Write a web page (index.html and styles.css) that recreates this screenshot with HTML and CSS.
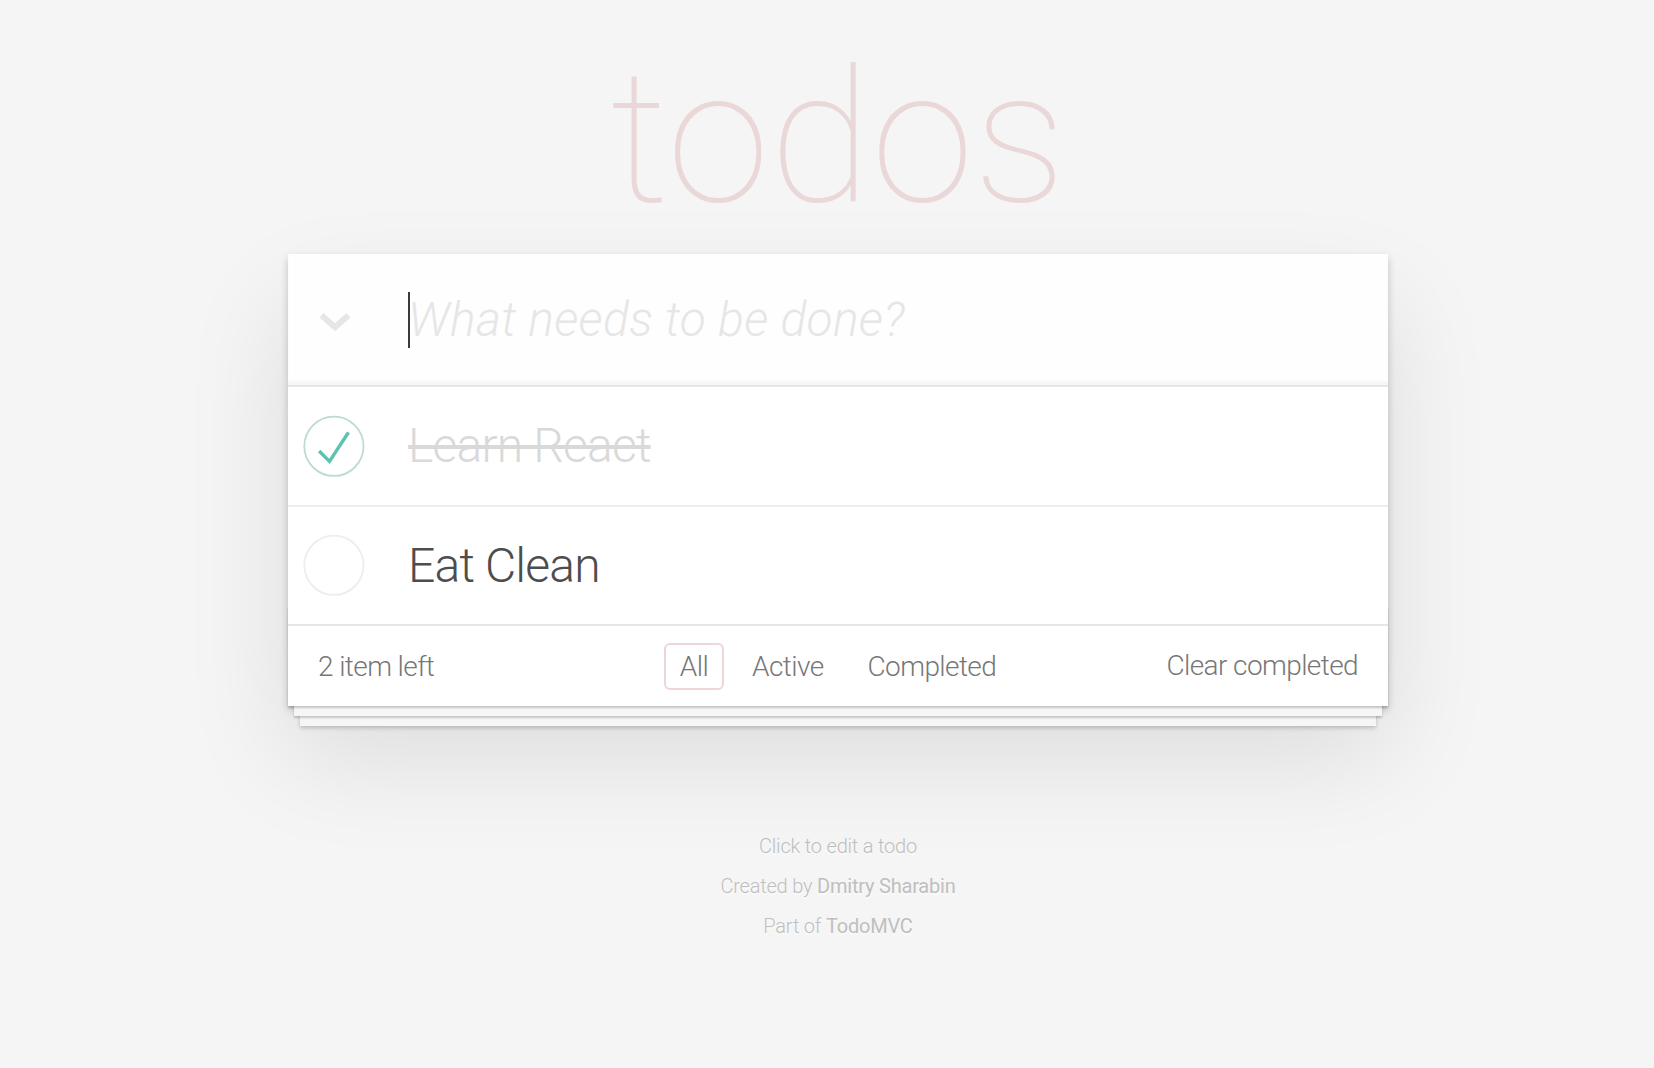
FILE: index.html
```html
<!DOCTYPE html>
<html lang="en">
<head>
<meta charset="utf-8">
<title>React • TodoMVC</title>
<link rel="stylesheet" href="styles.css">
</head>
<body>
<h1 class="title">todos</h1>
<section class="todoapp">
  <header class="header">
    <input class="new-todo" placeholder="What needs to be done?">
    <span class="caret"></span>
    <label class="toggle-all" aria-label="Mark all as complete">
      <svg viewBox="0 0 32 20" width="32" height="20"><polyline points="2.5,3.2 16,15.2 29.5,3.2" fill="none" stroke="#e6e6e6" stroke-width="6"/></svg>
    </label>
  </header>
  <ul class="todo-list">
    <li class="todo completed">
      <span class="toggle">
        <svg viewBox="-10 -18 100 135" width="80" height="80"><circle cx="50" cy="50" r="50" fill="none" stroke="#bddad5" stroke-width="3"/><path fill="#5dc2af" d="M72 25L42 71 27 56l-4 4 20 20 34-52z"/></svg>
      </span>
      <label class="todo-label">Learn React</label>
    </li>
    <li class="todo">
      <span class="toggle">
        <svg viewBox="-10 -18 100 135" width="80" height="80"><circle cx="50" cy="50" r="50" fill="none" stroke="#ededed" stroke-width="3"/></svg>
      </span>
      <label class="todo-label">Eat Clean</label>
    </li>
  </ul>
  <footer class="footer">
    <span class="todo-count">2 item left</span>
    <ul class="filters">
      <li><a class="filter selected" href="#/">All</a></li>
      <li><a class="filter" href="#/active">Active</a></li>
      <li><a class="filter" href="#/completed">Completed</a></li>
    </ul>
    <span class="clear-wrap"><button class="clear-completed">Clear completed</button></span>
  </footer>
</section>
<footer class="info">
  <p>Click to edit a todo</p>
  <p>Created by <a href="#">Dmitry Sharabin</a></p>
  <p>Part of <a href="#">TodoMVC</a></p>
</footer>
</body>
</html>
```
FILE: styles.css
```css
html {
  margin: 0;
  padding: 0;
}

body {
  margin: 0;
  padding: 0 0 0 22px;
  font-family: Roboto, "Helvetica Neue", Helvetica, Arial, sans-serif;
  font-weight: 300;
  font-size: 28px;
  line-height: 39.2px;
  color: #4d4d4d;
  background: #f5f5f5;
  -webkit-font-smoothing: antialiased;
}

.title {
  margin: 37px 0 17px;
  height: 200px;
  font-size: 186px;
  line-height: 200px;
  font-weight: 100;
  text-align: center;
  color: rgba(175, 47, 47, 0.15);
}

.todoapp {
  position: relative;
  width: 1100px;
  margin: 0 auto;
  background: #fff;
  box-shadow: 0 4px 8px 0 rgba(0, 0, 0, 0.2), 0 50px 100px 0 rgba(0, 0, 0, 0.1);
}

.header {
  position: relative;
}

.new-todo {
  display: block;
  box-sizing: border-box;
  width: 100%;
  height: 131px;
  margin: 0;
  padding: 32px 32px 32px 120px;
  border: none;
  outline: none;
  font-family: inherit;
  font-size: 48px;
  font-weight: 300;
  line-height: 67px;
  color: inherit;
  background: rgba(0, 0, 0, 0.003);
  box-shadow: inset 0 -4px 2px rgba(0, 0, 0, 0.03);
}

.new-todo::placeholder {
  font-style: italic;
  font-weight: 300;
  letter-spacing: 0.3px;
  color: #e6e6e6;
}

.caret {
  position: absolute;
  left: 120px;
  top: 38px;
  width: 2px;
  height: 56px;
  background: #3a3a3a;
}

.toggle-all {
  position: absolute;
  left: 31px;
  top: 58px;
  width: 32px;
  height: 20px;
  display: flex;
}

.todo-list {
  margin: 0;
  padding: 0;
  list-style: none;
  border-top: 2px solid #e6e6e6;
}

.todo {
  display: flex;
  align-items: center;
  font-size: 48px;
  border-bottom: 2px solid #ededed;
}

.todo:last-child {
  border-bottom: none;
}

.toggle {
  flex: none;
  width: 80px;
  height: 80px;
  display: flex;
}

.todo-label {
  flex: 1;
  padding: 30px 30px 30px 40px;
  line-height: 57.6px;
  letter-spacing: -0.8px;
  word-break: break-all;
}

.completed .todo-label {
  color: #d9d9d9;
  text-decoration: line-through;
}

.footer {
  position: relative;
  display: flex;
  align-items: center;
  height: 40px;
  padding: 20px 30px;
  border-top: 2px solid #e6e6e6;
  color: #777;
  letter-spacing: -0.6px;
}

.footer::before {
  content: '';
  position: absolute;
  right: 0;
  bottom: 0;
  left: 0;
  height: 100px;
  overflow: hidden;
  box-shadow: 0 2px 2px rgba(0, 0, 0, 0.2),
              0 16px 0 -6px #f6f6f6,
              0 18px 2px -6px rgba(0, 0, 0, 0.2),
              0 32px 0 -12px #f6f6f6,
              0 34px 4px -12px rgba(0, 0, 0, 0.2);
}

.todo-count {
  flex: 1 1 0;
  text-align: left;
}

.filters {
  flex: none;
  display: flex;
  margin: 0;
  padding: 0;
  list-style: none;
}

.filter {
  display: block;
  margin: 0 6px;
  padding: 6px 14px;
  line-height: 31px;
  border: 2px solid transparent;
  border-radius: 6px;
  color: inherit;
  text-decoration: none;
}

.filter.selected {
  border-color: rgba(175, 47, 47, 0.2);
}

.clear-wrap {
  flex: 1 1 0;
  text-align: right;
}

.clear-completed {
  margin: 0;
  padding: 0;
  border: 0;
  background: none;
  font: inherit;
  letter-spacing: inherit;
  line-height: 40px;
  color: inherit;
  cursor: pointer;
}

.info {
  margin: 130px 0 0;
  color: #bfbfbf;
  font-size: 20px;
  letter-spacing: -0.2px;
  text-shadow: 0 2px 0 rgba(255, 255, 255, 0.5);
  text-align: center;
}

.info p {
  margin: 20px 0;
  line-height: 1;
}

.info a {
  color: inherit;
  text-decoration: none;
  font-weight: 400;
}
```
